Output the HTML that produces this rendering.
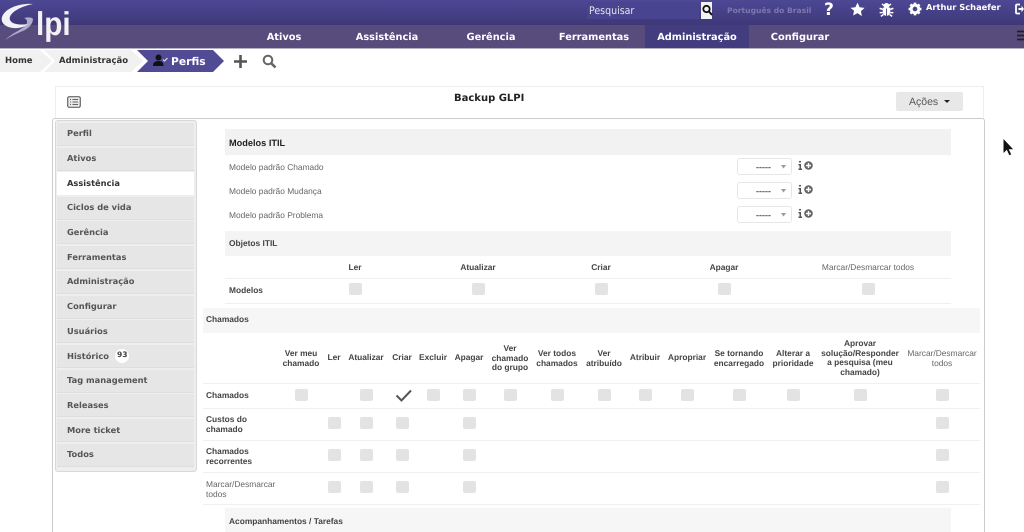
<!DOCTYPE html>
<html lang="pt-BR"><head><meta charset="utf-8"><title>Perfis - GLPI</title>
<style>
html,body{margin:0;padding:0;width:1024px;height:532px;overflow:hidden;background:#fff}
#p{position:relative;width:1024px;height:532px;overflow:hidden;font-family:"Liberation Sans",sans-serif;filter:blur(.35px);text-rendering:geometricPrecision}
#p div,#p svg{position:absolute}
.d{font-family:"DejaVu Sans",sans-serif;font-weight:bold;white-space:nowrap}
.n{top:31px;font-size:9.8px;color:#fff;width:120px;text-align:center;line-height:13px}
.s{left:57px;width:137px;height:22px;background:#e6e6e6;border-bottom:1px solid #dedede;box-sizing:content-box}
.sl{left:67px;font-size:8.3px;color:#555;line-height:12px}
.band{background:#f4f4f4}
.l{height:1px;background:#f0f0f0}
.t{font-size:8.4px;line-height:9.7px;color:#444;text-align:center;font-weight:bold;transform:translateX(-50%);white-space:nowrap}
.g{font-weight:normal;color:#666}
.b{font-size:8.4px;line-height:10px;color:#444;font-weight:bold;white-space:nowrap}
.r{font-size:8.4px;line-height:10px;color:#666;white-space:nowrap}
.c{width:12.5px;height:12.5px;background:#e3e3e3;border-radius:2px;margin-top:-.5px}
.sel{left:737px;width:55px;height:17px;background:#fff;border:1px solid #e6e6e6;border-radius:3px;box-sizing:border-box}
.selt{left:756px;font-size:9px;color:#555;line-height:10px;font-weight:bold}
</style></head><body><div id="p">
<div style="left:0;top:0;width:1024px;height:25px;background:linear-gradient(#4d4895,#3e3877)"></div>
<div style="left:0;top:25px;width:1024px;height:23px;background:#584c7d"></div>
<div style="left:0;top:48px;width:1024px;height:1px;background:#b5b2c4"></div>
<div style="left:645px;top:25px;width:104px;height:23px;background:#433c7f"></div>
<svg style="left:0;top:0" width="40" height="44" viewBox="0 0 40 44"><path d="M24 18c4-1 8-1 9 1 0 4-3 8-8 11-7 3-14 6-20 10 6-6 16-10 21-15 2-3 1-6-2-7z" fill="#aeacc8"/><path d="M33 4C20 3 5 8 2 17c-2 7 6 12 16 11 4-.5 8-2 10-4-6 1-16 1-18-4C8 14 18 7 33 4z" fill="#f2f1f6"/></svg>
<div style="left:36px;top:5.5px;font-size:33px;line-height:36px;color:#f2f1f6;font-weight:bold;transform:scaleX(.9);transform-origin:0 0">lpi</div>

<div style="left:587px;top:2px;width:112px;height:17px;background:#48448f"></div>
<div style="left:589px;top:5px;font-size:10.5px;line-height:12px;color:#e6e6ee;font-family:'DejaVu Sans',sans-serif;transform:scaleX(.9);transform-origin:0 0">Pesquisar</div>
<div style="left:701px;top:2px;width:11px;height:17px;background:#f3f3f3"></div>
<svg style="left:701px;top:4px" width="12" height="13" viewBox="0 0 12 13"><circle cx="5.500" cy="5" r="3.200" fill="none" stroke="#111" stroke-width="1.800"/><path d="M8 7.500l3 3.500" stroke="#111" stroke-width="2"/></svg>
<div class="d" style="left:727px;top:6px;font-size:7.600px;line-height:10px;color:#7d79ad">Português do Brasil</div>
<div class="d" style="left:824px;top:0;font-size:17px;line-height:20px;color:#fff">?</div>
<svg style="left:850px;top:2px" width="15" height="15" viewBox="0 0 24 24"><path d="M12 1l3.400 7.300 7.900 1-5.800 5.400 1.500 7.900L12 17.700l-7 3.900 1.500-7.900L.7 9.300l7.900-1z" fill="#fff"/></svg>
<svg style="left:879px;top:2px" width="15" height="15" viewBox="0 0 24 24"><g stroke="#fff" stroke-width="2.400" fill="none"><path d="M1 10l5 2M23 10l-5 2M1 17h5M23 17h-5M3 23l4-3M21 23l-4-3M5 3l3 3M19 3l-3 3"/></g><circle cx="12" cy="6" r="4.500" fill="#fff"/><path d="M6 9h5.300v13C8 22 6 19 6 15zM18 9h-5.300v13c3.300 0 5.300-3 5.300-7z" fill="#fff"/></svg>
<svg style="left:908px;top:2px" width="14" height="14" viewBox="0 0 24 24"><circle cx="12" cy="12" r="6.500" fill="none" stroke="#fff" stroke-width="5"/><path d="M12 1v22M1 12h22M4.200 4.200l15.600 15.600M19.800 4.200L4.200 19.800" stroke="#fff" stroke-width="4.500" stroke-dasharray="4 14"/></svg>
<div class="d" style="left:926px;top:2px;font-size:8.300px;line-height:11px;color:#fff">Arthur Schaefer</div>
<svg style="left:1015px;top:3px" width="9" height="12" viewBox="0 0 9 12"><path d="M5 1.500H2a1 1 0 0 0-1 1v7a1 1 0 0 0 1 1h3" stroke="#fff" stroke-width="1.800" fill="none"/><path d="M3.500 5h3V2.800L9 6 6.500 9.200V7h-3z" fill="#fff"/></svg>

<div class="d n" style="left:224px">Ativos</div>
<div class="d n" style="left:327px">Assistência</div>
<div class="d n" style="left:431px">Gerência</div>
<div class="d n" style="left:534px">Ferramentas</div>
<div class="d n" style="left:637px">Administração</div>
<div class="d n" style="left:740px">Configurar</div>
<svg style="left:1017px;top:30px" width="7" height="12"><path d="M0 1.500h7M0 5.500h7M0 9.500h7" stroke="#222" stroke-width="1.800"/></svg>

<svg style="left:0;top:50px" width="240" height="23" viewBox="0 0 240 23"><path d="M0 0H40L52 11 40 22H0z" fill="#f1f1f1"/><path d="M44 0H131L143 11 131 22H44L55 11z" fill="#f1f1f1"/><path d="M137 0H213L224 11 213 22H137L148 11z" fill="#514a95"/></svg>
<div class="d" style="left:5px;top:55px;font-size:8.500px;line-height:12px;color:#333">Home</div>
<div class="d" style="left:59px;top:55px;font-size:8.500px;line-height:12px;color:#333">Administração</div>
<svg style="left:153px;top:54px" width="15" height="13" viewBox="0 0 15 13"><circle cx="5.500" cy="3.500" r="3" fill="#111"/><path d="M0 12c0-3.500 2-5 5.500-5s5 1.500 5 5z" fill="#111"/><path d="M10 5.500l1.500 1.500 3-3" stroke="#ddd" stroke-width="1.200" fill="none"/></svg>
<div class="d" style="left:171px;top:55px;font-size:10.700px;line-height:14px;color:#fff">Perfis</div>
<svg style="left:234px;top:55px" width="13" height="13"><path d="M6.500 0v13M0 6.500h13" stroke="#555" stroke-width="2.600"/></svg>
<svg style="left:262px;top:54px" width="15" height="15" viewBox="0 0 15 15"><circle cx="6" cy="6" r="4.300" fill="none" stroke="#666" stroke-width="2"/><path d="M9.300 9.300l4.200 4.200" stroke="#666" stroke-width="2.600"/></svg>

<div style="left:55px;top:86px;width:927px;height:32px;border:1px solid #eee;border-bottom:0"></div>
<svg style="left:67px;top:96px" width="14" height="12" viewBox="0 0 14 12"><rect x=".7" y=".7" width="12.600" height="10.600" rx="1.500" fill="#e8e8e8" stroke="#666" stroke-width="1.200"/><path d="M3 3.500h1M5.500 3.500H11M3 6h1M5.500 6H11M3 8.500h1M5.500 8.500H11" stroke="#666"/></svg>
<div class="d" style="left:454px;top:92px;font-size:10px;line-height:13px;color:#222">Backup GLPI</div>
<div style="left:896px;top:92px;width:67px;height:19px;background:#e8e8e8;border-radius:2px"></div>
<div style="left:909px;top:96px;font-size:10.500px;line-height:12px;color:#555">Ações</div>
<div style="left:944px;top:100px;width:0;height:0;border:3px solid transparent;border-top:3px solid #222;border-bottom:0"></div>

<div style="left:52px;top:118px;width:933px;height:420px;border:1px solid #ccc;border-radius:3px;box-sizing:border-box"></div>
<svg style="left:1002px;top:138px" width="13" height="18" viewBox="0 0 13 18"><path d="M1.500 1v14l3.300-3.200 2.600 5.500 1.800-.9-2.500-5.100h4.400z" fill="#111"/></svg>

<div style="left:55px;top:120px;width:142px;height:352px;background:#eeeeee;border:1px solid #d8d8d8;border-radius:3px;box-sizing:border-box"></div>
<div class="s" style="top:123px"></div><div class="s" style="top:148px"></div><div class="s" style="top:172px;background:#fff;height:23px;border:0"></div><div class="s" style="top:197px"></div><div class="s" style="top:221px"></div><div class="s" style="top:246px"></div><div class="s" style="top:271px"></div><div class="s" style="top:296px"></div><div class="s" style="top:320px"></div><div class="s" style="top:345px"></div><div class="s" style="top:370px"></div><div class="s" style="top:394px"></div><div class="s" style="top:419px"></div><div class="s" style="top:444px"></div>
<div class="d sl" style="top:127px">Perfil</div>
<div class="d sl" style="top:152px">Ativos</div>
<div class="d sl" style="top:177px;color:#333">Assistência</div>
<div class="d sl" style="top:201px">Ciclos de vida</div>
<div class="d sl" style="top:226px">Gerência</div>
<div class="d sl" style="top:251px">Ferramentas</div>
<div class="d sl" style="top:275px">Administração</div>
<div class="d sl" style="top:300px">Configurar</div>
<div class="d sl" style="top:325px">Usuários</div>
<div class="d sl" style="top:350px">Histórico</div>
<div style="left:115px;top:349px;width:14px;height:14px;background:#fff;border-radius:50%"></div>
<div class="d" style="left:117px;top:350px;font-size:7.500px;line-height:9px;color:#444">93</div>
<div class="d sl" style="top:374px">Tag management</div>
<div class="d sl" style="top:399px">Releases</div>
<div class="d sl" style="top:424px">More ticket</div>
<div class="d sl" style="top:448px">Todos</div>

<div class="band" style="left:225px;top:129px;width:726px;height:26px;background:#f2f2f2"></div>
<div class="b" style="left:229px;top:137.500px;font-size:9.200px;color:#222">Modelos ITIL</div>
<div class="r" style="left:229px;top:161.500px">Modelo padrão Chamado</div>
<div class="r" style="left:229px;top:185.500px">Modelo padrão Mudança</div>
<div class="r" style="left:229px;top:209.500px">Modelo padrão Problema</div>
<div class="sel" style="top:158px"></div><div class="sel" style="top:182px"></div><div class="sel" style="top:206px"></div>
<div class="selt" style="top:162px">-----</div><div class="selt" style="top:186px">-----</div><div class="selt" style="top:210px">-----</div>
<svg style="left:780px;top:165px" width="7" height="56" fill="#999"><path d="M1 0h5L3.500 3.500zM1 24h5L3.500 27.500zM1 48h5L3.500 51.500z"/></svg>
<svg style="left:798px;top:160px" width="16" height="60" viewBox="0 0 16 60"><g id="x"><path d="M1 1h2v1.500H1zM.5 4H3v4.500h1V10H.5V8.500h1v-3h-1z" fill="#555"/><circle cx="10.500" cy="5.500" r="4.300" fill="#666"/><path d="M10.500 3v5M8 5.500h5" stroke="#fff" stroke-width="1.400"/></g><use href="#x" y="24"/><use href="#x" y="48"/></svg>

<div class="band" style="left:225px;top:231px;width:726px;height:25px"></div>
<div class="b" style="left:229px;top:238px">Objetos ITIL</div>
<div class="t" style="left:355px;top:263px">Ler</div><div class="t" style="left:478px;top:263px">Atualizar</div><div class="t" style="left:601px;top:263px">Criar</div><div class="t" style="left:724px;top:263px">Apagar</div><div class="t g" style="left:868px;top:263px">Marcar/Desmarcar todos</div>
<div class="l" style="left:225px;top:278px;width:726px"></div>
<div class="l" style="left:225px;top:303px;width:726px"></div>
<div class="b" style="left:229px;top:285px">Modelos</div>
<div class="c" style="left:349px;top:283px"></div><div class="c" style="left:472px;top:283px"></div><div class="c" style="left:595px;top:283px"></div><div class="c" style="left:718px;top:283px"></div><div class="c" style="left:862px;top:283px"></div>

<div class="band" style="left:203px;top:308px;width:777px;height:25px;background:#f6f6f6"></div>
<div class="b" style="left:206px;top:314px">Chamados</div>
<div class="t" style="left:301px;top:349px">Ver meu<br>chamado</div>
<div class="t" style="left:334px;top:353px">Ler</div>
<div class="t" style="left:366px;top:353px">Atualizar</div>
<div class="t" style="left:402px;top:353px">Criar</div>
<div class="t" style="left:433px;top:353px">Excluir</div>
<div class="t" style="left:469px;top:353px">Apagar</div>
<div class="t" style="left:510px;top:344px">Ver<br>chamado<br>do grupo</div>
<div class="t" style="left:557px;top:349px">Ver todos<br>chamados</div>
<div class="t" style="left:604px;top:349px">Ver<br>atribuído</div>
<div class="t" style="left:645px;top:353px">Atribuir</div>
<div class="t" style="left:687px;top:353px">Apropriar</div>
<div class="t" style="left:739px;top:349px">Se tornando<br>encarregado</div>
<div class="t" style="left:793px;top:349px">Alterar a<br>prioridade</div>
<div class="t" style="left:860px;top:339px">Aprovar<br>solução/Responder<br>a pesquisa (meu<br>chamado)</div>
<div class="t g" style="left:942px;top:349px">Marcar/Desmarcar<br>todos</div>
<div class="l" style="left:203px;top:383px;width:777px"></div>
<div class="l" style="left:203px;top:408px;width:777px"></div>
<div class="l" style="left:203px;top:440px;width:777px"></div>
<div class="l" style="left:203px;top:472px;width:777px"></div>
<div class="l" style="left:203px;top:504px;width:777px"></div>
<div class="b" style="left:206px;top:390px">Chamados</div>
<div class="b" style="left:206px;top:414px">Custos do<br>chamado</div>
<div class="b" style="left:206px;top:446px">Chamados<br>recorrentes</div>
<div class="r" style="left:206px;top:478.500px">Marcar/Desmarcar<br>todos</div>

<div class="c" style="left:295px;top:389px"></div>
<div class="c" style="left:360px;top:389px"></div>
<svg style="left:395px;top:389px" width="17" height="13"><path d="M1.500 6.500l5 5L16 1.500" stroke="#555" stroke-width="2" fill="none"/></svg>
<div class="c" style="left:427px;top:389px"></div>
<div class="c" style="left:463px;top:389px"></div>
<div class="c" style="left:504px;top:389px"></div>
<div class="c" style="left:551px;top:389px"></div>
<div class="c" style="left:598px;top:389px"></div>
<div class="c" style="left:639px;top:389px"></div>
<div class="c" style="left:681px;top:389px"></div>
<div class="c" style="left:733px;top:389px"></div>
<div class="c" style="left:787px;top:389px"></div>
<div class="c" style="left:854px;top:389px"></div>
<div class="c" style="left:936px;top:389px"></div>

<div class="c" style="left:328px;top:417px"></div><div class="c" style="left:360px;top:417px"></div><div class="c" style="left:396px;top:417px"></div><div class="c" style="left:463px;top:417px"></div><div class="c" style="left:936px;top:417px"></div>
<div class="c" style="left:328px;top:449px"></div><div class="c" style="left:360px;top:449px"></div><div class="c" style="left:396px;top:449px"></div><div class="c" style="left:463px;top:449px"></div><div class="c" style="left:936px;top:449px"></div>
<div class="c" style="left:328px;top:481px"></div><div class="c" style="left:360px;top:481px"></div><div class="c" style="left:396px;top:481px"></div><div class="c" style="left:463px;top:481px"></div><div class="c" style="left:936px;top:481px"></div>

<div class="band" style="left:225px;top:508px;width:726px;height:24px;background:#f6f6f6"></div>
<div class="b" style="left:229px;top:516px">Acompanhamentos / Tarefas</div>
</div></body></html>
